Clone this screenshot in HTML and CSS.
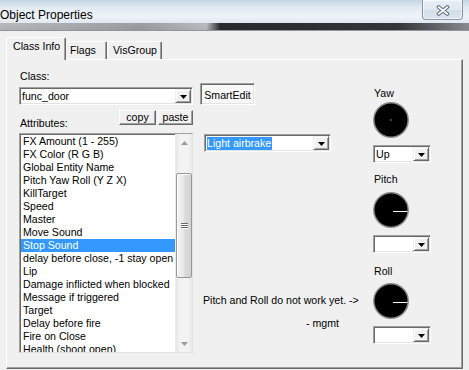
FILE: index.html
```html
<!DOCTYPE html>
<html>
<head>
<meta charset="utf-8">
<title>Object Properties</title>
<link rel="stylesheet" href="styles.css">
</head>
<body>
<div class="window">
  <div class="titlebar">
    <span class="title">Object Properties</span>
    <div class="close">
      <svg width="14" height="11" viewBox="0 0 14 11">
        <path d="M2.5 2 L11.5 9 M11.5 2 L2.5 9" stroke="#5d6b7a" stroke-width="3.6" stroke-linecap="round" fill="none"/>
        <path d="M2.5 2 L11.5 9 M11.5 2 L2.5 9" stroke="#ffffff" stroke-width="1.6" stroke-linecap="round" fill="none"/>
      </svg>
    </div>
  </div>
  <div class="client">
    <div class="tabs">
      <div class="tab active">Class Info</div>
      <div class="tab flags">Flags</div>
      <div class="tab visgroup">VisGroup</div>
    </div>
    <div class="panel">
      <div class="col-left">
        <div class="label">Class:</div>
        <div class="combo class-combo">
          <span class="combo-text">func_door</span>
          <span class="drop"><svg width="7" height="4" viewBox="0 0 7 4"><polygon points="0,0 7,0 3.5,4" fill="#000"/></svg></span>
        </div>
        <div class="attr-row">
          <div class="label attr-label">Attributes:</div>
          <div class="btns">
            <div class="btn copy">copy</div>
            <div class="btn paste">paste</div>
          </div>
        </div>
        <div class="listbox">
          <div class="items">
            <div class="item">FX Amount (1 - 255)</div>
            <div class="item">FX Color (R G B)</div>
            <div class="item">Global Entity Name</div>
            <div class="item">Pitch Yaw Roll (Y Z X)</div>
            <div class="item">KillTarget</div>
            <div class="item">Speed</div>
            <div class="item">Master</div>
            <div class="item">Move Sound</div>
            <div class="item selected">Stop Sound</div>
            <div class="item">delay before close, -1 stay open</div>
            <div class="item">Lip</div>
            <div class="item">Damage inflicted when blocked</div>
            <div class="item">Message if triggered</div>
            <div class="item">Target</div>
            <div class="item">Delay before fire</div>
            <div class="item">Fire on Close</div>
            <div class="item">Health (shoot open)</div>
          </div>
          <div class="scrollbar">
            <div class="sb-arrow"><svg width="7" height="4" viewBox="0 0 7 4"><polygon points="3.5,0 7,4 0,4" fill="#9a9a9a"/></svg></div>
            <div class="sb-track">
              <div class="sb-thumb">
                <svg width="7" height="6" viewBox="0 0 7 6">
                  <path d="M0 0.5 H7 M0 2.5 H7 M0 4.5 H7" stroke="#6a6a6a" stroke-width="1"/>
                  <path d="M0 1.5 H7 M0 3.5 H7 M0 5.5 H7" stroke="#ffffff" stroke-width="1"/>
                </svg>
              </div>
            </div>
            <div class="sb-arrow"><svg width="7" height="4" viewBox="0 0 7 4"><polygon points="0,0 7,0 3.5,4" fill="#9a9a9a"/></svg></div>
          </div>
        </div>
      </div>
      <div class="col-mid">
        <div class="toggle">SmartEdit</div>
        <div class="combo value-combo">
          <span class="combo-text"><span class="sel-text">Light airbrake</span></span>
          <span class="drop"><svg width="7" height="4" viewBox="0 0 7 4"><polygon points="0,0 7,0 3.5,4" fill="#000"/></svg></span>
        </div>
        <div class="note">Pitch and Roll do not work yet. -&gt;</div>
        <div class="note sig">- mgmt</div>
      </div>
      <div class="col-right">
        <div class="label">Yaw</div>
        <div class="dial">
          <svg width="36" height="36" viewBox="0 0 36 36">
            <circle cx="18" cy="18" r="17.2" fill="#000" stroke="#8c8c8c" stroke-width="1.5"/>
            <rect x="17.5" y="17.5" width="1" height="1" fill="#fff"/>
          </svg>
        </div>
        <div class="combo small-combo">
          <span class="combo-text">Up</span>
          <span class="drop"><svg width="7" height="4" viewBox="0 0 7 4"><polygon points="0,0 7,0 3.5,4" fill="#000"/></svg></span>
        </div>
        <div class="label pitch-label">Pitch</div>
        <div class="dial dial-pitch">
          <svg width="36" height="36" viewBox="0 0 36 36">
            <circle cx="18" cy="18" r="17.2" fill="#000" stroke="#8c8c8c" stroke-width="1.5"/>
            <path d="M20 19.5 H34.5" stroke="#fff" stroke-width="1"/>
          </svg>
        </div>
        <div class="combo small-combo">
          <span class="combo-text"></span>
          <span class="drop"><svg width="7" height="4" viewBox="0 0 7 4"><polygon points="0,0 7,0 3.5,4" fill="#000"/></svg></span>
        </div>
        <div class="label roll-label">Roll</div>
        <div class="dial dial-roll">
          <svg width="36" height="36" viewBox="0 0 36 36">
            <circle cx="18" cy="18" r="17.2" fill="#000" stroke="#8c8c8c" stroke-width="1.5"/>
            <path d="M20 19.5 H34.5" stroke="#fff" stroke-width="1"/>
          </svg>
        </div>
        <div class="combo small-combo">
          <span class="combo-text"></span>
          <span class="drop"><svg width="7" height="4" viewBox="0 0 7 4"><polygon points="0,0 7,0 3.5,4" fill="#000"/></svg></span>
        </div>
      </div>
    </div>
  </div>
</div>
</body>
</html>
```

FILE: styles.css
```css
* { box-sizing: border-box; }

html, body {
  margin: 0;
  padding: 0;
}

body {
  width: 469px;
  height: 370px;
  overflow: hidden;
  background: #f0f0f0;
  font-family: "Liberation Sans", Arial, sans-serif;
  font-size: 10.6px;
  color: #000;
}

.window {
  width: 469px;
  height: 370px;
  display: flex;
  flex-direction: column;
}

/* ---------- title bar ---------- */
.titlebar {
  height: 31px;
  flex: none;
  display: flex;
  justify-content: space-between;
  align-items: flex-start;
  background:
    linear-gradient(to right, rgba(150,150,150,0.55) 0, rgba(110,110,110,0.6) 30%, rgba(150,150,150,0.5) 44%, rgba(25,25,28,0.92) 47%, rgba(35,35,38,0.9) 85%, rgba(110,110,115,0.75) 100%) 0 23px / 100% 7px no-repeat,
    linear-gradient(to bottom, #c5d4e4 0, #e2eaf3 25%, #eef3f9 55%, #e2e8ef 75%, #cdd3da 100%);
  border-bottom: 1px solid #8e969e;
}

.title {
  font-size: 12px;
  line-height: 31px;
  padding-left: 0;
  color: #000;
}

.close {
  width: 41px;
  height: 20px;
  margin-right: 6px;
  border: 1px solid rgba(70, 85, 105, 0.55);
  border-top: none;
  border-radius: 0 0 4px 4px;
  background: linear-gradient(to bottom, #e9eff6 0, #dfe7f0 50%, #d3dde8 51%, #dbe4ee 100%);
  box-shadow: inset 0 0 0 1px rgba(255,255,255,0.6);
  display: flex;
  align-items: center;
  justify-content: center;
  padding-top: 1px;
}

/* ---------- client ---------- */
.client {
  flex: 1;
  padding: 6px 0 0 6px;
}

.tabs {
  height: 22px;
  display: flex;
  align-items: flex-end;
}

.tab {
  height: 18px;
  background: #f0f0f0;
  border-top: 1px solid #ffffff;
  border-left: 1px solid #ffffff;
  border-right: 1px solid #696969;
  box-shadow: inset -1px 0 0 #a0a0a0;
  border-radius: 2px 2px 0 0;
  line-height: 13px;
  padding-top: 2px;
  white-space: nowrap;
}

.tab.active {
  width: 60px;
  height: 23px;
  margin-bottom: -1px;
  padding-left: 6px;
  position: relative;
  z-index: 1;
}

.tab.flags {
  width: 41px;
  padding-left: 4px;
  border-left: none;
}

.tab.visgroup {
  width: 55px;
  padding-left: 5px;
}

.panel {
  width: 457px;
  height: 310px;
  display: flex;
  align-items: flex-start;
  gap: 7px;
  padding-left: 12px;
  border-top: 1px solid #ffffff;
  border-left: 1px solid #ffffff;
  border-right: 1px solid #696969;
  border-bottom: 1px solid #696969;
  box-shadow: inset -1px -1px 0 #a0a0a0;
}

.label {
  height: 13px;
  line-height: 13px;
  padding-left: 1px;
  white-space: nowrap;
}

/* ---------- left column ---------- */
.col-left {
  width: 174px;
  margin-top: 10px;
  display: flex;
  flex-direction: column;
}

.combo {
  height: 18px;
  display: flex;
  background: #ffffff;
  padding: 1px;
  border: 1px solid;
  border-color: #a0a0a0 #ffffff #ffffff #a0a0a0;
  box-shadow: inset 1px 1px 0 #696969, inset -1px -1px 0 #e3e3e3;
}

.combo-text {
  flex: 1;
  line-height: 14px;
  padding-left: 1px;
  white-space: nowrap;
  overflow: hidden;
}

.drop {
  width: 16px;
  height: 14px;
  background: #f0f0f0;
  border-top: 1px solid #f0f0f0;
  border-left: 1px solid #f0f0f0;
  border-right: 1px solid #696969;
  border-bottom: 1px solid #696969;
  box-shadow: inset 1px 1px 0 #ffffff, inset -1px -1px 0 #a0a0a0;
  display: flex;
  align-items: center;
  justify-content: center;
  padding-top: 1px;
}

.class-combo {
  margin-top: 4px;
}

.attr-row {
  margin-top: 5px;
  height: 20px;
  display: flex;
  justify-content: space-between;
}

.attr-label {
  align-self: flex-end;
}

.btns {
  display: flex;
  gap: 2px;
  align-self: flex-start;
}

.btn {
  height: 15px;
  line-height: 12px;
  text-align: center;
  background: #f0f0f0;
  border-top: 1px solid #ffffff;
  border-left: 1px solid #ffffff;
  border-right: 1px solid #696969;
  border-bottom: 1px solid #696969;
  box-shadow: inset -1px -1px 0 #a0a0a0;
}

.btn.copy { width: 37px; }
.btn.paste { width: 35px; }

.listbox {
  margin-top: 3px;
  height: 220px;
  display: flex;
  background: #ffffff;
  border: 1px solid;
  border-color: #a0a0a0 #e3e3e3 #e3e3e3 #a0a0a0;
  box-shadow: inset 1px 1px 0 #696969;
  overflow: hidden;
}

.items {
  flex: 1;
  padding: 1px 0 0 1px;
  overflow: hidden;
}

.item {
  height: 13px;
  line-height: 13px;
  padding-left: 2px;
  white-space: nowrap;
}

.item.selected {
  background: #3399ff;
  color: #ffffff;
}

.scrollbar {
  width: 17px;
  display: flex;
  flex-direction: column;
  background: linear-gradient(to right, #e6e6e6 0, #f3f3f3 25%, #f3f3f3 75%, #e8e8e8 100%);
  border-left: 1px solid #ececec;
}

.sb-arrow {
  height: 17px;
  display: flex;
  align-items: center;
  justify-content: center;
}

.sb-track {
  flex: 1;
}

.sb-thumb {
  margin: 22px 0 0 0;
  height: 105px;
  border: 1px solid #979797;
  border-radius: 2px;
  background: linear-gradient(to right, #f3f3f3 0, #e9e9e9 45%, #dcdcdc 55%, #d2d2d2 100%);
  box-shadow: inset 1px 1px 0 #ffffff;
  display: flex;
  align-items: center;
  justify-content: center;
}

/* ---------- middle column ---------- */
.col-mid {
  width: 166px;
  margin-top: 23px;
  display: flex;
  flex-direction: column;
  align-items: flex-start;
}

.toggle {
  width: 55px;
  height: 22px;
  line-height: 20px;
  text-align: center;
  padding-top: 1px;
  background: #f8f8f8;
  border-top: 1px solid #a0a0a0;
  border-left: 1px solid #a0a0a0;
  border-right: 1px solid #ffffff;
  border-bottom: 1px solid #ffffff;
  box-shadow: inset 1px 1px 0 #696969, inset -1px -1px 0 #e3e3e3;
  white-space: nowrap;
}

.value-combo {
  width: 127px;
  margin-top: 29px;
  margin-left: 4px;
}

.sel-text {
  background: #3399ff;
  color: #ffffff;
  padding: 0 1px 0 0;
  display: inline-block;
  line-height: 13px;
}

.note {
  height: 13px;
  line-height: 13px;
  white-space: nowrap;
  margin-top: 142px;
  margin-left: 3px;
}

.note.sig {
  margin-top: 10px;
  margin-left: 106px;
}

/* ---------- right column ---------- */
.col-right {
  width: 58px;
  margin-top: 27px;
  display: flex;
  flex-direction: column;
}

.dial {
  width: 36px;
  height: 36px;
  margin-top: 2px;
}

.dial svg { display: block; }

.dial-pitch { margin-top: 6px; }
.dial-roll { margin-top: 5px; }

.small-combo {
  width: 58px;
  margin-top: 7px;
}

.pitch-label { margin-top: 10px; }
.roll-label { margin-top: 12px; }
```
